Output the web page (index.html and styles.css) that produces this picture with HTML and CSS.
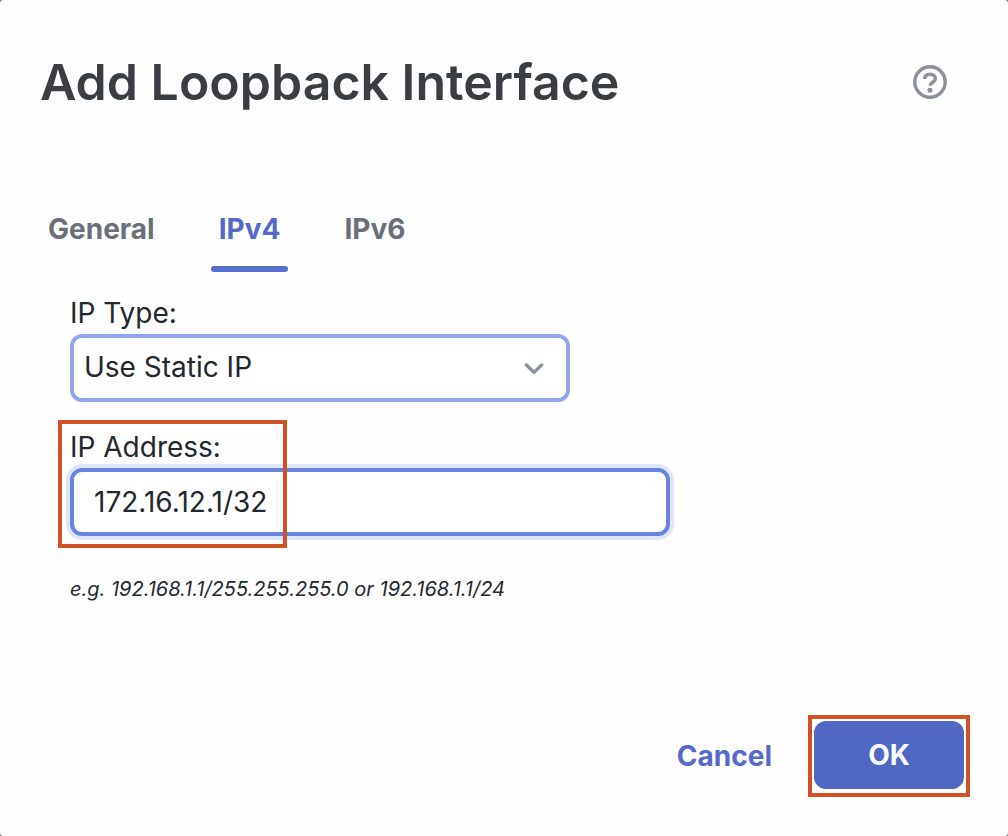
FILE: index.html
```html
<!DOCTYPE html>
<html lang="en">
<head>
  <meta charset="UTF-8">
  <meta name="viewport" content="width=device-width, initial-scale=1.0">
  <title>Add Loopback Interface</title>
  <link rel="stylesheet" href="styles.css">
</head>
<body>
  <form class="dialog">
    <header class="dialog-header">
      <h1>Add Loopback Interface</h1>
      <button type="button" class="help" aria-label="Help">
        <svg width="34" height="34" viewBox="0 0 34 34" fill="none" stroke="currentColor">
          <circle cx="17" cy="17" r="15.2" stroke-width="3.4"/>
          <path d="M11.6 14C11.8 11 13.9 9.2 17 9.2c3.1 0 5.3 1.8 5.3 4.5 0 3.7-4.9 3.5-5.1 6.9" stroke-width="3.6"/>
          <circle cx="17" cy="25.2" r="2.5" fill="currentColor" stroke="none"/>
        </svg>
      </button>
    </header>

    <nav class="tabs" role="tablist">
      <button type="button" class="tab" role="tab">General</button>
      <button type="button" class="tab active" role="tab" aria-selected="true">IPv4</button>
      <button type="button" class="tab" role="tab">IPv6</button>
    </nav>

    <div class="fields">
      <div class="field">
        <label for="ipType">IP Type:</label>
        <div class="select-box">
          <select id="ipType">
            <option>Use Static IP</option>
          </select>
          <svg class="chevron" width="20" height="12" viewBox="0 0 20 12" fill="none" stroke="currentColor" stroke-width="3.4" stroke-linecap="round" stroke-linejoin="round">
            <path d="M2.4 2l7.6 7.4L17.6 2"/>
          </svg>
        </div>
      </div>
      <div class="field">
        <label for="ipAddress">IP Address:</label>
        <input type="text" id="ipAddress" value="172.16.12.1/32">
        <span class="highlight"></span>
      </div>
      <p class="hint">e.g. 192.168.1.1/255.255.255.0 or 192.168.1.1/24</p>
    </div>

    <footer class="dialog-footer">
      <button type="button" class="cancel">Cancel</button>
      <div class="ok-box">
        <button type="submit" class="ok">OK</button>
      </div>
    </footer>
  </form>
</body>
</html>
```

FILE: styles.css
```css
* {
  box-sizing: border-box;
}
body {
  margin: 0;
  background: #8b8b8b;
  color: #23282e;
  font-family: Inter, sans-serif;
  font-size: 28px;
  line-height: 34px;
}
button, input, select {
  font: inherit;
  color: inherit;
}
button {
  padding: 0;
  border: none;
  background: none;
  cursor: pointer;
}

.dialog {
  display: flex;
  flex-direction: column;
  min-height: 100vh;
  padding: 48px 38px 39px 40px;
  background: #fefefe;
  border-radius: 4px;
}
.dialog-header {
  display: flex;
  justify-content: space-between;
  align-items: center;
  padding-right: 23px;
}
h1 {
  margin: 0;
  color: #3a3e43;
  font-size: 50px;
  font-weight: 600;
  line-height: 68px;
}
.help {
  color: #8c929b;
}
.help svg {
  display: block;
}

.tabs {
  display: flex;
  gap: 48px;
  margin-top: 96px;
}
.tab {
  padding: 0 8px;
  color: #697079;
  font-weight: 700;
}
.tab::after {
  content: "";
  display: block;
  height: 6px;
  margin: 20px -8px 0;
  border-radius: 3px;
}
.tab.active {
  color: #5669cb;
}
.tab.active::after {
  background: #586fd0;
}

.fields {
  padding: 24px 30px;
}
.field {
  position: relative;
  max-width: 600px;
  margin-bottom: 28px;
}
label {
  display: block;
  margin-bottom: 4px;
}
.select-box {
  position: relative;
  max-width: 500px;
}
select, input {
  display: block;
  width: 100%;
  height: 68px;
  border: 4px solid #93a7f0;
  border-radius: 12px;
  background: #fff;
  outline: none;
}
select {
  padding: 0 60px 2px 10px;
  appearance: none;
}
input {
  padding: 0 20px;
  border-color: #6884e0;
  box-shadow: 0 0 0 4px #dfe6f9;
}
.chevron {
  position: absolute;
  top: 29px;
  right: 26px;
  color: #8c929b;
  pointer-events: none;
}
.highlight {
  position: absolute;
  top: -10px;
  bottom: -12px;
  left: -12px;
  width: 229px;
  border: 4px solid #d05224;
  pointer-events: none;
}
.hint {
  margin: 40px 0 0;
  font-size: 20px;
  font-style: italic;
  line-height: 26px;
}

.dialog-footer {
  display: flex;
  justify-content: flex-end;
  align-items: center;
  gap: 36px;
  margin-top: auto;
}
.cancel {
  color: #5669cb;
  font-weight: 700;
}
.ok-box {
  padding: 2px 2px 4px;
  border: 4px solid #d05224;
}
.ok {
  display: block;
  width: 150px;
  height: 68px;
  border-radius: 12px;
  background: #5067c3;
  color: #f8f9fb;
  font-weight: 700;
}
```
